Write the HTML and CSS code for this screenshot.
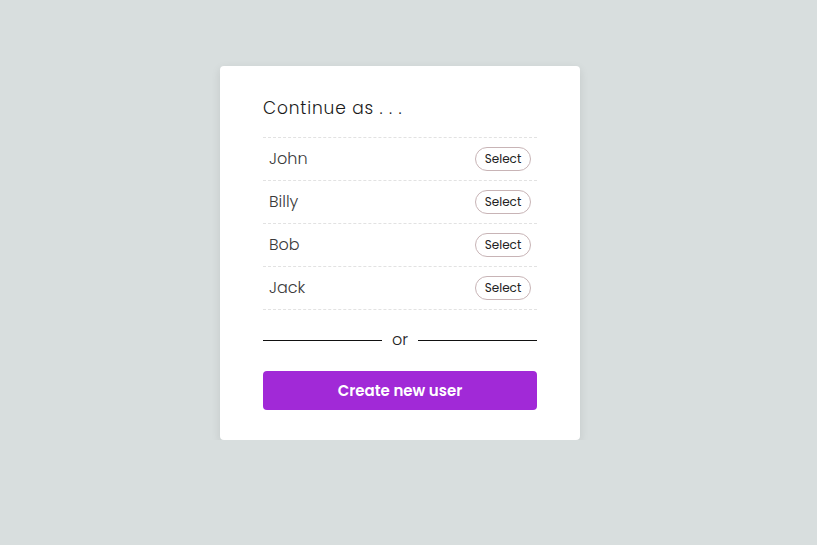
FILE: index.html
```html
<!DOCTYPE html>
<html>
<head>
<meta charset="utf-8">
<link rel="stylesheet" href="styles.css">
</head>
<body>
<div class="page">
  <div class="card">
    <div class="title">Continue as . . .</div>
    <ul class="users">
      <li class="user"><span class="name">John</span><button class="select">Select</button></li>
      <li class="user"><span class="name">Billy</span><button class="select">Select</button></li>
      <li class="user"><span class="name">Bob</span><button class="select">Select</button></li>
      <li class="user"><span class="name">Jack</span><button class="select">Select</button></li>
    </ul>
    <div class="divider"><span class="line"></span><span class="or">or</span><span class="line"></span></div>
    <button class="create">Create new user</button>
  </div>
</div>
</body>
</html>
```
FILE: styles.css
```css
html, body {
  margin: 0;
  padding: 0;
  background: #d8dede;
  font-family: "Poppins", "Lato", "Open Sans", sans-serif;
}
.page {
  display: flex;
  justify-content: center;
  padding-top: 66px;
  padding-right: 17px;
}
.card {
  width: 274px;
  padding: 30px 43px;
  background: #fff;
  border-radius: 4px;
  box-shadow: 0 3px 10px rgba(0, 0, 0, 0.1);
}
.title {
  font-size: 17px;
  font-weight: 300;
  line-height: 24px;
  color: #1a1a1a;
  margin-bottom: 17px;
  letter-spacing: 0.85px;
}
.users {
  list-style: none;
  margin: 0;
  padding: 0;
  border-top: 1px dashed #e2e2e2;
}
.user {
  height: 42px;
  display: flex;
  align-items: center;
  justify-content: space-between;
  padding: 0 6px;
  border-bottom: 1px dashed #e2e2e2;
}
.name {
  font-size: 16px;
  font-weight: 300;
  line-height: 22px;
  margin-top: -1px;
  color: #3a3a3a;
}
.select {
  font-family: inherit;
  font-size: 12px;
  color: #222;
  background: #fff;
  border: 1px solid #c8b4b6;
  border-radius: 12px;
  height: 24px;
  width: 56px;
  padding: 0;
  cursor: pointer;
}
.divider {
  display: flex;
  align-items: center;
  margin-top: 20px;
  height: 20px;
}
.line {
  flex: 1;
  height: 1px;
  background: #111;
}
.or {
  padding: 0 10px;
  font-size: 16px;
  font-weight: 300;
  color: #222;
  line-height: 20px;
}
.create {
  display: block;
  width: 100%;
  margin-top: 21px;
  height: 39px;
  border: none;
  border-radius: 4px;
  background: #a129d7;
  color: #fff;
  font-family: inherit;
  font-size: 15px;
  font-weight: 600;
  cursor: pointer;
}
```
